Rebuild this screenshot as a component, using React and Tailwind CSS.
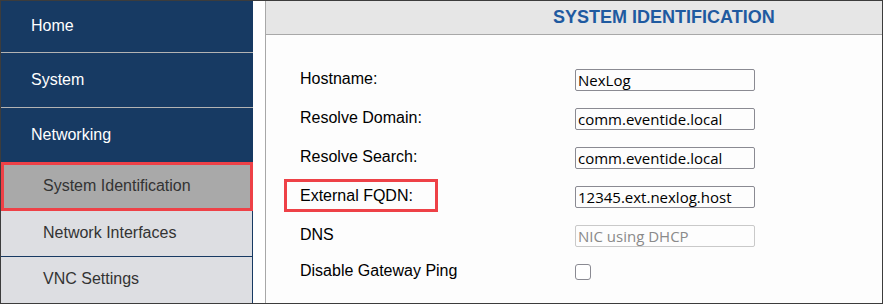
import React from 'react'

const rows = [
  { label: 'Hostname:', value: 'NexLog' },
  { label: 'Resolve Domain:', value: 'comm.eventide.local' },
  { label: 'Resolve Search:', value: 'comm.eventide.local' },
  { label: 'External FQDN:', value: '12345.ext.nexlog.host', marked: true },
  { label: 'DNS', value: 'NIC using DHCP', disabled: true },
]

export default function App() {
  return (
    <div className="w-[883px] h-[304px] border border-[#3c3c3c] bg-white flex overflow-hidden font-['Liberation_Sans',Arial,sans-serif]">
      {/* sidebar */}
      <div className="w-[252px] flex flex-col shrink-0">
        <div className="h-[52px] bg-[#173a63] border-b border-[#b3b3b3] pl-[30px] pb-[1px] flex items-center text-white text-[16px]">Home</div>
        <div className="h-[55px] bg-[#173a63] border-b border-[#b3b3b3] pl-[30px] flex items-center text-white text-[16px]">System</div>
        <div className="h-[54px] bg-[#173a63] pl-[30px] flex items-center text-white text-[16px]">Networking</div>
        <div className="h-[49px] bg-[#a9a9a9] border-[3px] border-[#ee4147] pl-[39px] pb-[2px] flex items-center text-[#333] text-[16px]">System Identification</div>
        <div className="h-[46px] bg-[#dddee2] border-r border-b border-[#173a63] pl-[42px] pb-[2px] flex items-center text-[#333] text-[16px]">Network Interfaces</div>
        <div className="flex-1 bg-[#dddee2] border-r border-[#173a63] pl-[42px] pb-[3px] flex items-center text-[#333] text-[16px]">VNC Settings</div>
      </div>

      {/* content */}
      <div className="ml-[12px] flex-1 border-l border-[#a8a8a8] bg-[#fdfdfd] flex flex-col">
        <div className="h-[34px] bg-[#e6e6e6] border-b border-[#a8a8a8] flex items-center pl-[287px] text-[#1f5aa0] font-bold text-[18px]">
          SYSTEM IDENTIFICATION
        </div>
        <div className="pt-[25px] pl-[34px] flex flex-col">
          {rows.map(r => (
            <div key={r.label} className="h-[39px] flex items-center">
              <div className="w-[275px] text-[16px] text-black">
                {r.marked ? (
                  <div className="-ml-[16px] w-[154px] h-[33px] border-[3px] border-[#ee4147] pl-[13px] flex items-center -mt-[2px]">{r.label}</div>
                ) : (
                  <div className="-mt-[1px]">{r.label}</div>
                )}
              </div>
              <div className={`w-[180px] h-[22px] rounded-[2px] border px-[2px] mt-[1px] flex items-center text-[15px] font-['Open_Sans',sans-serif] ${r.disabled ? 'border-[#c9c9c9] text-[#8a8a8a]' : 'border-[#8a8a92] text-black'}`}>
                {r.value}
              </div>
            </div>
          ))}
          <div className="h-[36px] flex items-center">
            <div className="w-[275px] text-[16px] text-black -mt-[5px]">Disable Gateway Ping</div>
            <div className="w-[16px] h-[16px] rounded-[3px] border border-[#8a8a92] bg-white -mt-[2px]" />
          </div>
        </div>
      </div>
    </div>
  )
}
